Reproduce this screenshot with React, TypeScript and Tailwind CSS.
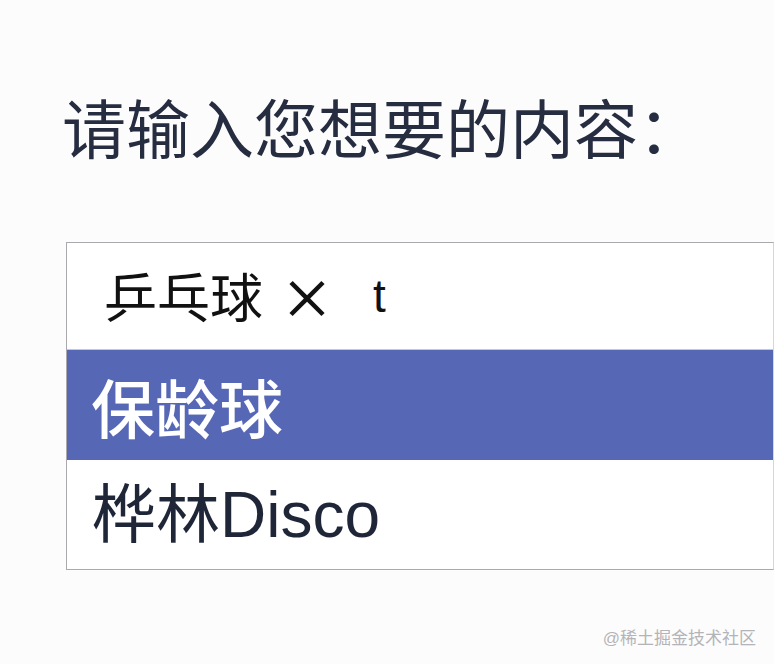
export default function App() {
  return (
    <div className="relative h-[664px] w-[774px] overflow-hidden bg-[#fcfcfd] font-['Liberation_Sans','Noto_Sans_CJK_SC',sans-serif]">
      <div className="pl-[66px] pt-[91px]">
        <h1 className="-ml-[4px] font-['Noto_Sans_CJK_SC',sans-serif] text-[64px] leading-[68px] font-normal text-[#262d40]">
          请输入您想要的内容：
        </h1>

        <div className="mt-[83px] w-[708px] border border-[#a9a9ae] border-r-[#d6d6da] bg-white">
          {/* input with selected tag */}
          <div className="flex h-[107px] items-center border-b border-[#c8c8cd] pl-[37px] text-[#111]">
            <span className="font-['Noto_Sans_CJK_SC',sans-serif] text-[53px]">乒乓球</span>
            <span className="ml-[17px] font-['Noto_Sans_CJK_SC',sans-serif] text-[54px] leading-none font-medium">×</span>
            <span className="ml-[39px] text-[46px]">t</span>
          </div>

          {/* suggestions */}
          <ul>
            <li className="flex h-[110px] items-center bg-[#5667b6] pl-[24px] font-['Noto_Sans_CJK_SC',sans-serif] text-[64px] font-medium text-white">
              保龄球
            </li>
            <li className="flex h-[109px] items-center pl-[25px] text-[64px] text-[#1f2638]">
              桦林Disco
            </li>
          </ul>
        </div>
      </div>

      <div className="absolute right-[18px] bottom-[13px] text-[17px] text-[#b4b4b8]">
        @稀土掘金技术社区
      </div>
    </div>
  )
}
